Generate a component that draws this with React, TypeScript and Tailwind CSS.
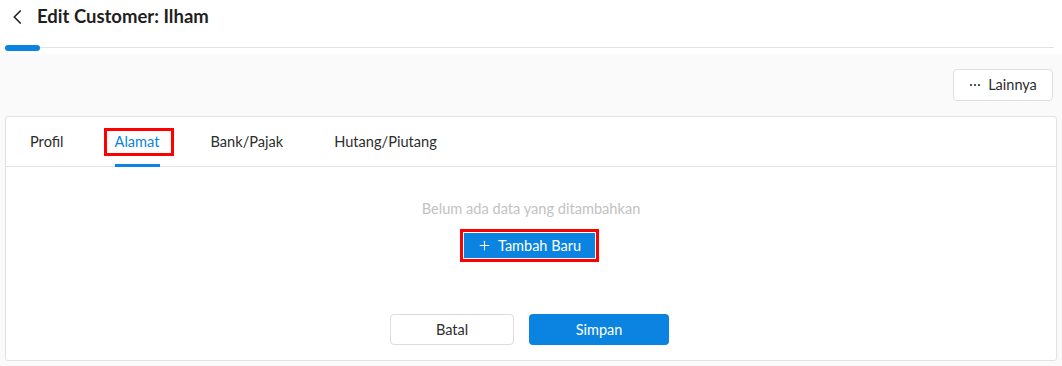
import React, { useState } from 'react';

const ChevronLeftIcon = (props: React.SVGProps<SVGSVGElement>) => (
    <svg {...props} xmlns="http://www.w3.org/2000/svg" viewBox="0 0 24 24" fill="none" stroke="currentColor" strokeWidth="2.2" strokeLinecap="round" strokeLinejoin="round"><path d="m15 4-8 8 8 8"/></svg>
);
const PlusIcon = (props: React.SVGProps<SVGSVGElement>) => (
    <svg {...props} xmlns="http://www.w3.org/2000/svg" viewBox="0 0 24 24" fill="none" stroke="currentColor" strokeWidth="2" strokeLinecap="round"><path d="M12 4v16"/><path d="M4 12h16"/></svg>
);
const DotsIcon = (props: React.SVGProps<SVGSVGElement>) => (
    <svg {...props} xmlns="http://www.w3.org/2000/svg" viewBox="0 0 12 4" fill="currentColor"><circle cx="2" cy="2" r="1.1"/><circle cx="6" cy="2" r="1.1"/><circle cx="10" cy="2" r="1.1"/></svg>
);

const tabs = ['Profil', 'Alamat', 'Bank/Pajak', 'Hutang/Piutang'];

const App: React.FC = () => {
    const [activeTab, setActiveTab] = useState('Alamat');

    return (
        <div className="w-full h-[366px] bg-[#fafafa] font-['Lato','Liberation_Sans',sans-serif] text-[#2d2d2d] overflow-hidden">
            <div className="bg-white">
                <div className="flex items-center h-[34px] pl-[9px]">
                    <ChevronLeftIcon className="w-[18px] h-[18px] text-[#222]" />
                    <h1 className="ml-[10px] text-[18.5px] font-bold text-[#1f1f1f]">Edit Customer: Ilham</h1>
                </div>
                <div className="flex items-center h-[20px] pt-[7px] pl-[5px] pr-[8px]">
                    <div className="w-[35px] h-[6px] rounded-full bg-[#0a84e0]" />
                    <div className="flex-1 h-px bg-[#e3e3e3]" />
                </div>
            </div>

            <div className="flex justify-end pr-[9px] mt-[15px]">
                <button className="flex items-center gap-[7px] h-[32px] w-[100px] justify-center bg-white border border-[#dedede] rounded-[4px] text-[14.5px] text-[#2d2d2d]">
                    <DotsIcon className="w-[12px] h-[4px]" />
                    Lainnya
                </button>
            </div>

            <div className="mx-[5px] mt-[15px] bg-white border border-[#e2e2e2] rounded-[3px] h-[245px] flex flex-col">
                <div className="flex h-[50px] border-b border-[#e2e2e2] pl-[24px]">
                    {tabs.map((tab) => (
                        <button
                            key={tab}
                            onClick={() => setActiveTab(tab)}
                            className={`relative h-full mr-[51px] text-[14.6px] ${activeTab === tab ? 'text-[#0a84e0]' : 'text-[#2d2d2d]'}`}
                        >
                            {tab}
                            {activeTab === tab && (
                                <>
                                    <span className="absolute left-0 right-0 bottom-[-1px] h-[3px] bg-[#0a84e0]" />
                                    <span className="absolute left-[-11px] right-[-14px] top-[11px] h-[28px] border-[3px] border-[#ff0000]" />
                                </>
                            )}
                        </button>
                    ))}
                </div>

                <div className="flex flex-col items-center pt-[31px]">
                    <p className="text-[14.6px] text-[#c2c2c2]">Belum ada data yang ditambahkan</p>
                    <div className="mt-[9px] mr-[3px] border-[3px] border-[#ff0000] p-px">
                        <button className="flex items-center gap-[7px] h-[25px] w-[131px] justify-center bg-[#0a84e0] text-white text-[14.5px]">
                            <PlusIcon className="w-[13px] h-[13px]" />
                            Tambah Baru
                        </button>
                    </div>
                </div>

                <div className="flex justify-center gap-[15px] mt-auto mb-[15px] pr-[3px]">
                    <button className="w-[124px] h-[31px] bg-white border border-[#dcdcdc] rounded-[4px] text-[14.5px] text-[#2d2d2d]">Batal</button>
                    <button className="w-[140px] h-[31px] bg-[#0a84e0] rounded-[4px] text-[14.5px] text-white">Simpan</button>
                </div>
            </div>
        </div>
    );
};

export default App;
